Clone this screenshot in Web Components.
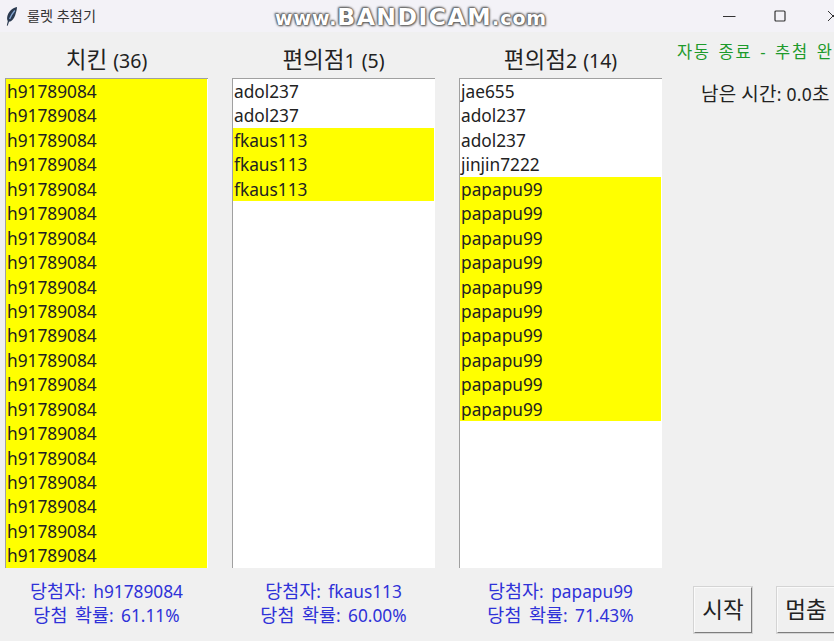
<!DOCTYPE html>
<html lang="ko"><head><meta charset="utf-8"><title>룰렛 추첨기</title>
<style>html,body{margin:0;padding:0;width:834px;height:641px;overflow:hidden;background:#f0f0f0}body{font-family:"Noto Sans","Noto Sans CJK KR",sans-serif}</style>
</head><body>
<roulette-app></roulette-app>
<script>
const KR='"Noto Sans","Noto Sans CJK KR",sans-serif';
const hangul=s=>s.replace(/[가-힣]+/g,m=>`<span class="k">${m}</span>`);
class TitleBar extends HTMLElement{constructor(){super();this.attachShadow({mode:'open'}).innerHTML=`<style>
:host{display:flex;align-items:center;height:32px;background:#f3f2f7;position:relative;font:14.200px ${KR};color:#333}
.ico{margin-left:5px;width:13px;height:20px;flex:none}
.t{margin-left:9px;margin-top:-3px;white-space:nowrap}
.sp{flex:1}
.c{width:50px;height:32px;display:flex;align-items:center;justify-content:center;flex:none}
.mark{position:absolute;left:275px;top:3px;height:24px;display:flex;align-items:baseline;font:bold 19px "DejaVu Sans",sans-serif;color:#fff;white-space:nowrap;letter-spacing:.9px;
 text-shadow:0 0 1px #555,0 0 2px #555,0 0 3px #666,1px 1px 2px #777,-1px -1px 2px #777}
.mark b{font-size:23.500px;letter-spacing:1.500px;font-weight:bold}
</style>
<svg class="ico" viewBox="0 0 13 20"><path d="M12 1C7 2 3 6 2.200 11c-.3 1.700 0 3 .6 4L1.800 19.500l.9.2L4 15.800c2.700-.3 4.900-2.800 6.200-6.600C11 6.400 12 3.600 12 1z" fill="#2a3a50"/><path d="M9.800 4.500C8 6.500 6.200 9 4.600 13" stroke="#84a6d2" stroke-width="1.300" fill="none"/></svg>
<span class="t">룰렛 추첨기</span><span class="sp"></span>
<span class="c" style="margin-right:1px"><svg width="14" height="12"><path d="M1 6.500h12.500" stroke="#333" stroke-width="1"/></svg></span>
<span class="c"><svg width="12" height="12"><rect x="1" y="1" width="10" height="10" rx="1" fill="none" stroke="#333" stroke-width="1.200"/></svg></span>
<span class="c" style="width:29px;justify-content:flex-start;padding-left:22px;box-sizing:border-box"><svg width="12" height="12" style="flex:none"><path d="M1 1l10 10M11 1L1 11" stroke="#333" stroke-width="1"/></svg></span>
<div class="mark">www.<b>BANDICAM</b>.com</div>`}}
customElements.define('title-bar',TitleBar);

class ListRow extends HTMLElement{constructor(){super();this.attachShadow({mode:'open'}).innerHTML=`<style>
:host{display:block;height:24.450px;line-height:25px;padding-left:1px;margin-right:1px;white-space:nowrap;font-size:17.300px;color:#222}
:host([hit]){background:#ff0;color:#222}
</style><slot></slot>`}}
customElements.define('list-row',ListRow);

class RouletteColumn extends HTMLElement{constructor(){super();const r=this.attachShadow({mode:'open'});
r.innerHTML=`<style>
:host{display:flex;flex:none;flex-direction:column;width:203px;font-family:${KR}}
h2{margin:0;height:46px;box-sizing:border-box;padding-top:14px;text-align:center;font:400 19.500px/28px ${KR};color:#222;white-space:nowrap;word-spacing:1px}
h2 .k{font-size:22.500px}
.list{height:490px;box-sizing:border-box;background:#fff;border-top:1px solid #a0a0a0;border-left:1px solid #a0a0a0;overflow:hidden}
.res{margin-top:12px;text-align:center;color:#2f32d8;font-size:17.300px;line-height:22.500px;white-space:nowrap}
.res div{word-spacing:3px}
.res .k{font-size:18.500px}
</style><h2></h2><div class="list"></div><div class="res"><div class="w"></div><div class="p"></div></div>`}
connectedCallback(){const r=this.shadowRoot;r.querySelector('h2').innerHTML=hangul(this.getAttribute('title'));
r.querySelector('.w').innerHTML=hangul('당첨자: '+this.getAttribute('winner'));
r.querySelector('.p').innerHTML=hangul('당첨 확률: '+this.getAttribute('rate'));
const list=r.querySelector('.list');
for(const e of this.getAttribute('rows').split(',')){const [n,c,h]=e.split(':');for(let i=0;i<+c;i++){const x=document.createElement('list-row');x.textContent=n;if(h)x.setAttribute('hit','');list.append(x)}}}}
customElements.define('roulette-column',RouletteColumn);

class PushButton extends HTMLElement{constructor(){super();this.attachShadow({mode:'open'}).innerHTML=`<style>
:host{display:flex;flex:none;align-items:center;justify-content:center;width:60px;height:48px;box-sizing:border-box;padding-bottom:4px;background:#f0f0f0;font:22.500px ${KR};color:#222;
border:2px solid;border-color:#fafafa #7d7d7d #7d7d7d #fafafa;outline:1px solid #d4d4d4;outline-offset:-1px}
</style><slot></slot>`}}
customElements.define('push-button',PushButton);

class StatusPanel extends HTMLElement{constructor(){super();this.attachShadow({mode:'open'}).innerHTML=`<style>
:host{display:flex;flex:none;flex-direction:column;width:172px;height:609px;font-family:${KR};overflow:hidden}
.g{margin:8px 0 0 15px;color:#1d9a2b;font-size:16.500px;line-height:24px;letter-spacing:1.650px;word-spacing:2px;white-space:nowrap}
.r{margin:17px 0 0 39px;color:#222;font-size:17.500px;line-height:26px;white-space:nowrap;letter-spacing:.25px}
.r .k{font-size:19px}
.b{margin-top:auto;display:flex;gap:23px;padding:0 0 7px 31px;width:200px}
</style><div class="g">자동 종료 - 추첨 완</div><div class="r">${hangul('남은 시간: 0.0초')}</div><div class="b"><push-button>시작</push-button><push-button>멈춤</push-button></div>`}}
customElements.define('status-panel',StatusPanel);

class RouletteApp extends HTMLElement{constructor(){super();this.attachShadow({mode:'open'}).innerHTML=`<style>
:host{display:block;width:834px;height:641px;overflow:hidden;background:#f0f0f0}
main{display:flex;padding-left:5px;height:609px}
</style><title-bar></title-bar><main>
<roulette-column title="치킨 (36)" winner="h91789084" rate="61.11%" rows="h91789084:20:1"></roulette-column>
<roulette-column style="margin-left:24px" title="편의점1 (5)" winner="fkaus113" rate="60.00%" rows="adol237:2,fkaus113:3:1"></roulette-column>
<roulette-column style="margin-left:24px" title="편의점2 (14)" winner="papapu99" rate="71.43%" rows="jae655:1,adol237:2,jinjin7222:1,papapu99:10:1"></roulette-column>
<status-panel></status-panel></main>`}}
customElements.define('roulette-app',RouletteApp);
</script></body></html>
